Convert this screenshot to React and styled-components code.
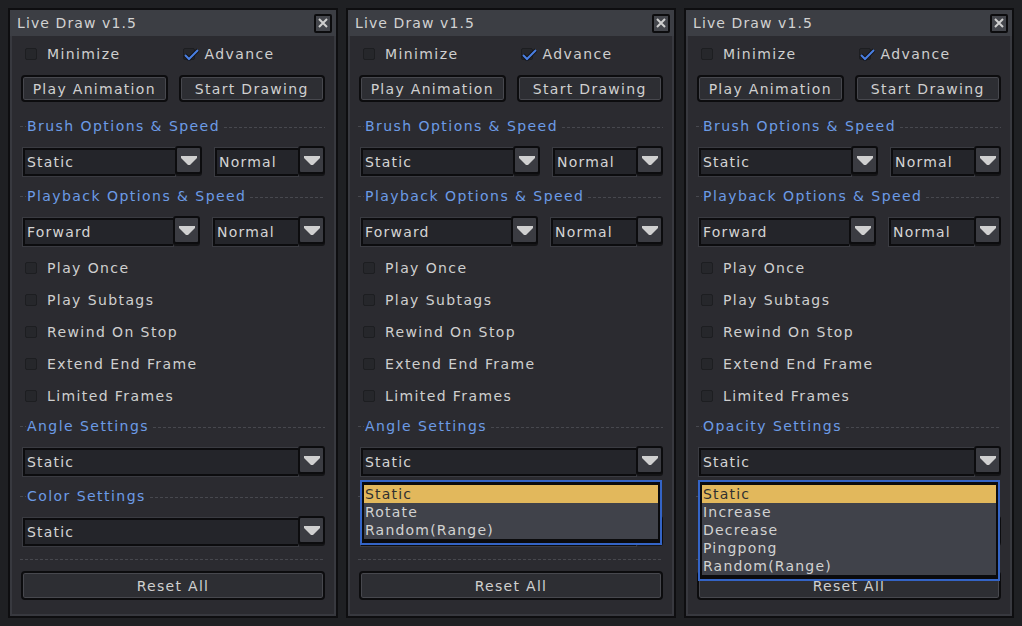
import React from 'react';
import styled, { createGlobalStyle } from 'styled-components';

const GlobalStyle = createGlobalStyle`
  html, body {
    margin: 0;
    padding: 0;
    background: #1f2023;
  }
  body {
    font-family: "DejaVu Sans", "Liberation Sans", sans-serif;
  }
`;

const Page = styled.div`
  display: flex;
  gap: 8px;
  padding: 8px;
  height: 626px;
  box-sizing: border-box;
`;

const Panel = styled.section`
  position: relative;
  width: 330px;
  height: 610px;
  box-sizing: border-box;
  border: 2px solid #0e0e10;
  background: #2b2b30;
  box-shadow: inset 0 0 0 2px #38393f;
  display: flex;
  flex-direction: column;
`;

const TitleBar = styled.header`
  height: 26px;
  flex: none;
  display: flex;
  align-items: center;
  justify-content: space-between;
  padding: 0 4px 0 7px;
  background: #3c3e44;
  color: #d2d2d2;
  font-size: 14px;
  letter-spacing: 1.1px;
`;

const CloseBtn = styled.div`
  width: 18px;
  height: 19px;
  box-sizing: border-box;
  border: 2px solid #0c0c0e;
  border-radius: 2px;
  background: #44464c;
  display: flex;
  align-items: center;
  justify-content: center;
`;

const Body = styled.div`
  display: flex;
  flex-direction: column;
  padding: 2px 11px 0;
`;

const TwoCol = styled.div`
  display: grid;
  grid-template-columns: 1fr 1fr;
  column-gap: 11px;
  margin-top: ${p => p.$mt || 0}px;
`;

const CheckRow = styled.label`
  height: 32px;
  display: flex;
  align-items: center;
  gap: 10px;
  padding-left: 4px;
  color: #cfcfcf;
  font-size: 14px;
  letter-spacing: 1.4px;
`;

const CheckList = styled.div`
  display: flex;
  flex-direction: column;
  margin-top: 6px;
`;

const Box = styled.span`
  position: relative;
  width: 12px;
  height: 12px;
  flex: none;
  box-sizing: border-box;
  background: #26272b;
  border: 1px solid #1d1e21;
  border-radius: 2px;
`;

const Tick = styled.svg`
  position: absolute;
  left: -1px;
  top: -1px;
`;

const Button = styled.div`
  height: ${p => p.$h || 27}px;
  box-sizing: border-box;
  border: 2px solid #0c0c0e;
  border-radius: 4px;
  background: #2d2e33;
  box-shadow: inset 0 0 0 1px #47484e;
  display: flex;
  align-items: center;
  justify-content: center;
  color: #d0d0d0;
  font-size: 14px;
  letter-spacing: 1.3px;
  margin-top: ${p => p.$mt || 0}px;
`;

const Section = styled.div`
  height: 20px;
  display: flex;
  align-items: center;
  margin-top: ${p => p.$mt}px;
  margin-left: -1px;
  color: #6c9be6;
  font-size: 14px;
  letter-spacing: 1.45px;
  &::before,
  &::after {
    content: '';
    height: 1px;
    background: repeating-linear-gradient(90deg, #47484e 0 3px, transparent 3px 5px);
  }
  &::before {
    width: 6px;
    margin-right: 1px;
  }
  &::after {
    flex: 1;
    margin-left: 4px;
    margin-top: 2px;
  }
`;

const Separator = styled.div`
  height: 1px;
  margin: 13px 0 0 -1px;
  background: repeating-linear-gradient(90deg, #47484e 0 3px, transparent 3px 5px);
`;

const SelectRow = styled.div`
  position: relative;
  display: grid;
  grid-template-columns: ${p => p.$cols};
  column-gap: 13px;
  padding-left: 2px;
  margin-top: 12px;
`;

const Select = styled.div`
  display: flex;
  height: 28px;
`;

const Field = styled.div`
  flex: 1;
  min-width: 0;
  box-sizing: border-box;
  background: #24252a;
  border: 2px solid #0c0c0e;
  border-right: none;
  box-shadow: 0 0 0 1px #3a3b41;
  display: flex;
  align-items: center;
  padding-left: 2px;
  color: #d4d4d4;
  font-size: 14px;
  letter-spacing: 1.2px;
`;

const ArrowBtn = styled.div`
  width: 27px;
  flex: none;
  box-sizing: border-box;
  margin-top: -2px;
  height: 28px;
  border: 2px solid #0c0c0e;
  border-radius: 3px;
  background: #3b3c42;
  box-shadow: 0 2px 0 #141416;
  display: flex;
  align-items: center;
  justify-content: center;
`;

const Menu = styled.ul`
  position: absolute;
  left: 1px;
  right: 1px;
  top: calc(100% + 4px);
  z-index: 10;
  margin: 0;
  padding: 3px 2px 4px;
  list-style: none;
  border: 2px solid #3464c6;
  background: #0b0b0d;
`;

const MenuItem = styled.li`
  height: 18px;
  display: flex;
  align-items: center;
  padding-left: 1px;
  background: ${p => (p.$active ? '#e2b85c' : '#40424a')};
  color: ${p => (p.$active ? '#303030' : '#d2d2d2')};
  font-size: 14px;
  letter-spacing: 1.2px;
`;

const Arrow = () => (
  <svg width="16" height="9" viewBox="0 0 16 9">
    <polygon points="0,0 16,0 16,2 9,9 7,9 0,2" fill="#d0d0d0" />
  </svg>
);

const Check = ({ label, checked }) => (
  <CheckRow>
    <Box>
      {checked && (
        <Tick width="16" height="13" viewBox="0 0 16 13">
          <polyline points="2,7 6,11 15,2" fill="none" stroke="#141416" strokeWidth="4" />
          <polyline points="2,7 6,11 15,2" fill="none" stroke="#4a7fe2" strokeWidth="2" />
        </Tick>
      )}
    </Box>
    {label}
  </CheckRow>
);

const Dropdown = ({ value }) => (
  <Select>
    <Field>{value}</Field>
    <ArrowBtn>
      <Arrow />
    </ArrowBtn>
  </Select>
);

const LiveDrawPanel = ({ section, menu }) => (
  <Panel>
    <TitleBar>
      Live Draw v1.5
      <CloseBtn>
        <svg width="10" height="10" viewBox="0 0 10 10">
          <path d="M1 1 L9 9 M9 1 L1 9" stroke="#d0d0d0" strokeWidth="2" />
        </svg>
      </CloseBtn>
    </TitleBar>
    <Body>
      <TwoCol>
        <Check label="Minimize" />
        <Check label="Advance" checked />
      </TwoCol>
      <TwoCol $mt={5}>
        <Button>Play Animation</Button>
        <Button>Start Drawing</Button>
      </TwoCol>

      <Section $mt={14}>Brush Options &amp; Speed</Section>
      <SelectRow $cols="179px 110px">
        <Dropdown value="Static" />
        <Dropdown value="Normal" />
      </SelectRow>

      <Section $mt={10}>Playback Options &amp; Speed</Section>
      <SelectRow $cols="177px 112px">
        <Dropdown value="Forward" />
        <Dropdown value="Normal" />
      </SelectRow>

      <CheckList>
        {['Play Once', 'Play Subtags', 'Rewind On Stop', 'Extend End Frame', 'Limited Frames'].map(l => (
          <Check key={l} label={l} />
        ))}
      </CheckList>

      <Section $mt={4}>{section}</Section>
      <SelectRow $cols="1fr">
        <Dropdown value="Static" />
        {menu && (
          <Menu>
            {menu.map((item, i) => (
              <MenuItem key={item} $active={i === 0}>{item}</MenuItem>
            ))}
          </Menu>
        )}
      </SelectRow>

      <Section $mt={10}>Color Settings</Section>
      <SelectRow $cols="1fr">
        <Dropdown value="Static" />
      </SelectRow>

      <Separator />
      <Button $mt={11} $h={29}>Reset All</Button>
    </Body>
  </Panel>
);

const panels = [
  { section: 'Angle Settings', menu: null },
  { section: 'Angle Settings', menu: ['Static', 'Rotate', 'Random(Range)'] },
  { section: 'Opacity Settings', menu: ['Static', 'Increase', 'Decrease', 'Pingpong', 'Random(Range)'] },
];

export default function App() {
  return (
    <>
      <GlobalStyle />
      <Page>
        {panels.map((p, i) => (
          <LiveDrawPanel key={i} section={p.section} menu={p.menu} />
        ))}
      </Page>
    </>
  );
}
